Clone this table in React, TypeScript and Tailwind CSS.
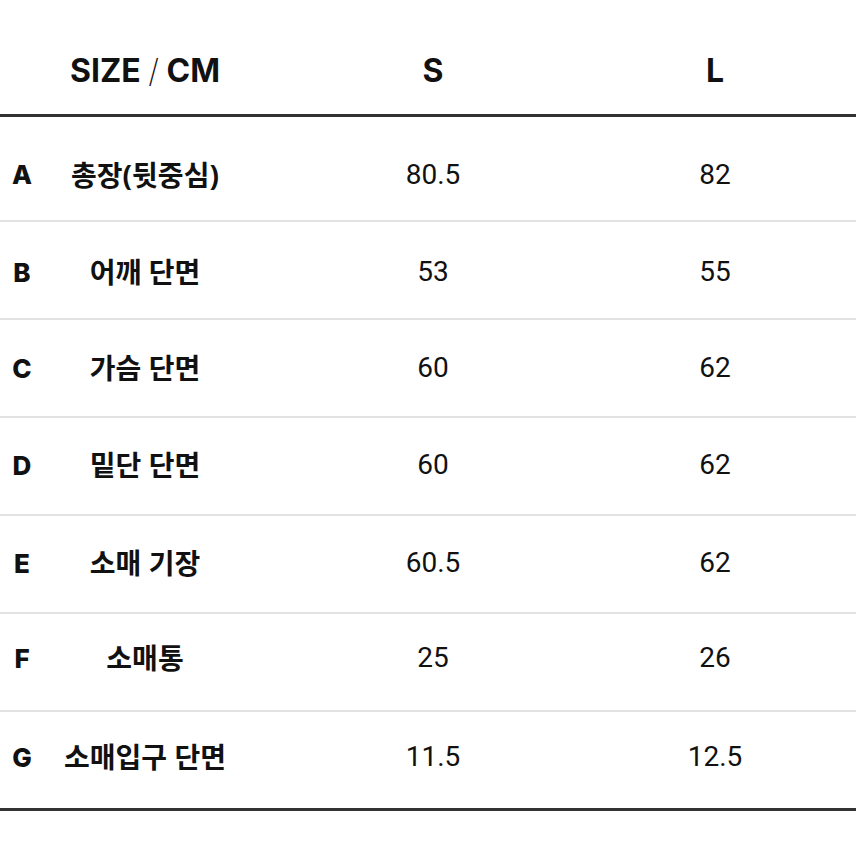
const rows = [
  { key: 'A', name: '총장(뒷중심)', s: '80.5', l: '82', pad: 'h-[103px] pt-[12px]' },
  { key: 'B', name: '어깨 단면', s: '53', l: '55', pad: 'h-[96px] pt-[4px]' },
  { key: 'C', name: '가슴 단면', s: '60', l: '62', pad: 'h-[96px]' },
  { key: 'D', name: '밑단 단면', s: '60', l: '62', pad: 'h-[96px] pb-[2px]' },
  { key: 'E', name: '소매 기장', s: '60.5', l: '62', pad: 'h-[96px] pb-[2px]' },
  { key: 'F', name: '소매통', s: '25', l: '26', pad: 'h-[96px] pb-[8px]' },
  { key: 'G', name: '소매입구 단면', s: '11.5', l: '12.5', pad: 'h-[96px] pb-[6px]' },
];

const cols = 'grid grid-cols-[44px_202px_374px_190px_1fr] items-center';
const kr = "font-['Noto_Sans','Noto_Sans_CJK_KR',sans-serif]";

export default function App() {
  return (
    <div className="w-[856px] h-[856px] bg-white text-[#111] overflow-hidden">
      {/* header */}
      <div className={`${cols} h-[114px] pt-[28px] font-['Inter',sans-serif] font-bold text-[32px]`}>
        <div />
        <div className="text-center">
          SIZE <span className="font-extralight">/</span> CM
        </div>
        <div className="text-center">S</div>
        <div className="text-center">L</div>
        <div />
      </div>
      <div className="h-[3px] bg-[#333]" />

      {rows.map((r, i) => (
        <div key={r.key}>
          {i > 0 && <div className="h-[2px] bg-[#e2e2e2]" />}
          <div className={`${cols} ${r.pad}`}>
            <div className="text-center font-['Inter',sans-serif] font-extrabold text-[26px]">{r.key}</div>
            <div className={`text-center ${kr} font-bold text-[28px]`}>{r.name}</div>
            <div className="text-center font-['Roboto',sans-serif] text-[28px]">{r.s}</div>
            <div className="text-center font-['Roboto',sans-serif] text-[28px]">{r.l}</div>
            <div />
          </div>
        </div>
      ))}
      <div className="h-[3px] bg-[#333]" />
    </div>
  );
}
